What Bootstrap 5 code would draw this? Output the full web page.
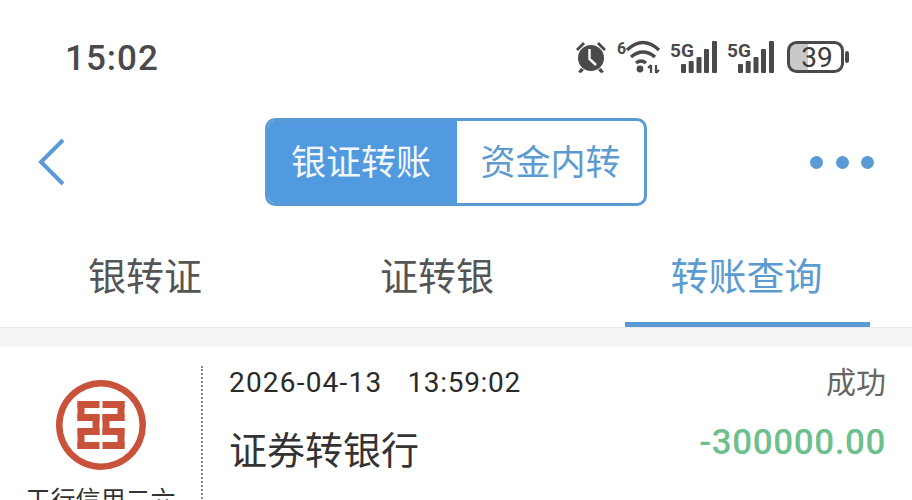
<!DOCTYPE html>
<html lang="zh">
<head>
    <meta charset="UTF-8">
    <meta name="viewport" content="width=device-width, initial-scale=1.0">
    <link href="https://cdn.jsdelivr.net/npm/bootstrap@5.3.0/dist/css/bootstrap.min.css" rel="stylesheet">
    <title>银证转账</title>
    <style>
        html, body { height: 500px; overflow: hidden; background: #fff; }
        body { font-family: "Roboto", "Noto Sans CJK SC", sans-serif; color: #333; }
        .status-row { height: 118px; padding: 38px 62px 0 66px; }
        .clock { font-size: 35px; line-height: 42px; font-weight: 500; color: #4a4a4a; letter-spacing: 1px; margin-left: -1px; }
        .status-icons { gap: 9px; margin-top: 2px; }
        .batt-icon { margin-left: 3px; }
        .header-row { height: 88px; padding: 0 38px; }
        .side-slot { width: 227px; }
        .switcher { width: 382px; height: 88px; border: 3px solid #5b9bd5; border-radius: 10px; overflow: hidden; }
        .switcher div { font-size: 35px; line-height: 1; padding-top: 2px; }
        .switch-on { width: 189px; background: #519ae0; color: #f4f8fd; padding-right: 3px; }
        .switch-off { color: #5b9bd0; }
        .dots { gap: 12.5px; }
        .dots span { width: 13px; height: 13px; background: #5b9bd5; border-radius: 50%; }
        .tab-row { height: 121px; }
        .tab-item { font-size: 38px; line-height: 1; color: #555; padding-top: 52px; }
        .tab-a { width: 290px; }
        .tab-b { width: 294px; }
        .tab-sel { width: 328px; color: #5b9bd0; position: relative; padding-right: 3px; }
        .tab-sel::after { content: ""; position: absolute; left: 41px; width: 245px; bottom: 0; height: 5px; background: #5a9ad6; }
        .gap-band { height: 20px; background: #f5f5f5; border-top: 1px solid #e9e9e9; }
        .record { padding-top: 19px; }
        .bank-col { width: 203px; flex: none; border-right: 2px dotted #8a8a8a; height: 140px; padding-top: 14px; }
        .bank-name { font-size: 25px; line-height: 30px; color: #333; margin-top: 16px; white-space: nowrap; }
        .info-col { padding: 0 26px; }
        .rec-time { font-size: 28px; line-height: 34px; color: #2a2a2a; }
        .rec-date-part { letter-spacing: 1.2px; }
        .rec-clock-part { letter-spacing: .7px; margin-left: 25px; }
        .rec-status { font-size: 30px; line-height: 34px; color: #666; }
        .rec-type { font-size: 38px; line-height: 44px; color: #333; margin-top: 29px; }
        .rec-amount { font-size: 35px; line-height: 44px; font-weight: 500; color: #6cc08e; letter-spacing: .6px; margin-top: 21px; }
    </style>
</head>
<body>
    <!-- status bar -->
    <div class="status-row d-flex justify-content-between align-items-start">
        <div class="clock">15:02</div>
        <div class="status-icons d-flex align-items-center">
            <svg width="34" height="34" viewBox="0 0 34 34" fill="#4a4a4a">
                <circle cx="17" cy="18" r="13"/>
                <path d="M2 9 L9 2 L11 4 L4 11Z M32 9 L25 2 L23 4 L30 11Z M7 28 L4 32 L7 33 L10 30Z M27 28 L30 32 L27 33 L24 30Z"/>
                <path d="M15.5 9 V19 L22 25" fill="none" stroke="#fff" stroke-width="2.4"/>
            </svg>
            <svg width="44" height="34" viewBox="0 0 44 34">
                <text x="0" y="14" font-size="16" font-weight="700" fill="#4a4a4a" font-family="Roboto">6</text>
                <path d="M10 10 Q26 -5 42 10 M14 17 Q26 7 38 17 M19 23 Q24 19 29 23" fill="none" stroke="#4a4a4a" stroke-width="3.4"/>
                <circle cx="23" cy="29" r="3.4" fill="#4a4a4a"/>
                <path d="M34 25 V33 M39 25 V33 M31 28 L34 25 M39 33 L42 30" fill="none" stroke="#4a4a4a" stroke-width="2.2"/>
            </svg>
            <svg width="48" height="34" viewBox="0 0 48 34" fill="#4a4a4a">
                <text x="0" y="17" font-size="19" font-weight="700" font-family="Roboto">5G</text>
                <rect x="11" y="24" width="5" height="9" rx="1"/><rect x="18.7" y="21" width="5" height="12" rx="1"/>
                <rect x="26.5" y="17" width="5" height="16" rx="1"/><rect x="34" y="9" width="5" height="24" rx="1"/>
                <rect x="42" y="1" width="5" height="32" rx="1"/>
            </svg>
            <svg width="48" height="34" viewBox="0 0 48 34" fill="#4a4a4a">
                <text x="0" y="17" font-size="19" font-weight="700" font-family="Roboto">5G</text>
                <rect x="11" y="24" width="5" height="9" rx="1"/><rect x="18.7" y="21" width="5" height="12" rx="1"/>
                <rect x="26.5" y="17" width="5" height="16" rx="1"/><rect x="34" y="9" width="5" height="24" rx="1"/>
                <rect x="42" y="1" width="5" height="32" rx="1"/>
            </svg>
            <svg class="batt-icon" width="63" height="32" viewBox="0 0 63 32">
                <rect x="3" y="3" width="18" height="26" fill="#c9c9c9"/>
                <rect x="1.5" y="1.5" width="54" height="29" rx="8" fill="none" stroke="#4a4a4a" stroke-width="3"/>
                <rect x="58" y="10" width="4" height="12" rx="2" fill="#4a4a4a"/>
                <text x="30" y="26" text-anchor="middle" font-size="28" fill="#3c3c3c" font-family="Roboto">39</text>
            </svg>
        </div>
    </div>

    <!-- header -->
    <div class="header-row d-flex align-items-center">
        <div class="side-slot">
            <svg class="d-block" width="28" height="48" viewBox="0 0 28 48"><path d="M25 2 L3 24 L25 46" fill="none" stroke="#5b9bd5" stroke-width="4"/></svg>
        </div>
        <div class="switcher d-flex">
            <div class="switch-on d-flex align-items-center justify-content-center">银证转账</div>
            <div class="switch-off flex-grow-1 d-flex align-items-center justify-content-center">资金内转</div>
        </div>
        <div class="side-slot dots d-flex justify-content-end"><span></span><span></span><span></span></div>
    </div>

    <!-- tabs -->
    <div class="tab-row d-flex">
        <div class="tab-item tab-a text-center">银转证</div>
        <div class="tab-item tab-b text-center">证转银</div>
        <div class="tab-item text-center tab-sel">转账查询</div>
    </div>
    <div class="gap-band"></div>

    <!-- record -->
    <div class="record d-flex">
        <div class="bank-col text-center">
            <svg width="90" height="90" viewBox="0 0 90 90" fill="#c9523a">
                <path fill-rule="evenodd" d="M45 0a45 45 0 1 0 0 90a45 45 0 1 0 0-90zM45 6.500a38.500 38.500 0 1 1 0 77a38.500 38.500 0 1 1 0-77z"/>
                <g>
                    <rect x="21.500" y="21" width="22" height="7"/><rect x="21.500" y="21" width="7" height="20"/>
                    <rect x="21.500" y="34" width="22" height="7"/><rect x="36.500" y="34" width="7" height="21"/>
                    <rect x="21.500" y="48" width="22" height="7"/><rect x="21.500" y="48" width="7" height="21"/>
                    <rect x="21.500" y="62" width="22" height="7"/>
                </g>
                <g transform="matrix(-1 0 0 1 90 0)">
                    <rect x="21.500" y="21" width="22" height="7"/><rect x="21.500" y="21" width="7" height="20"/>
                    <rect x="21.500" y="34" width="22" height="7"/><rect x="36.500" y="34" width="7" height="21"/>
                    <rect x="21.500" y="48" width="22" height="7"/><rect x="21.500" y="48" width="7" height="21"/>
                    <rect x="21.500" y="62" width="22" height="7"/>
                </g>
            </svg>
            <div class="bank-name">工行信用二六</div>
        </div>
        <div class="info-col flex-grow-1">
            <div class="d-flex justify-content-between">
                <div class="rec-time"><span class="rec-date-part">2026-04-13</span><span class="rec-clock-part">13:59:02</span></div>
                <div class="rec-status">成功</div>
            </div>
            <div class="d-flex justify-content-between align-items-start">
                <div class="rec-type">证券转银行</div>
                <div class="rec-amount">-300000.00</div>
            </div>
        </div>
    </div>
    <script src="https://cdn.jsdelivr.net/npm/bootstrap@5.3.0/dist/js/bootstrap.bundle.min.js"></script>
</body>
</html>
